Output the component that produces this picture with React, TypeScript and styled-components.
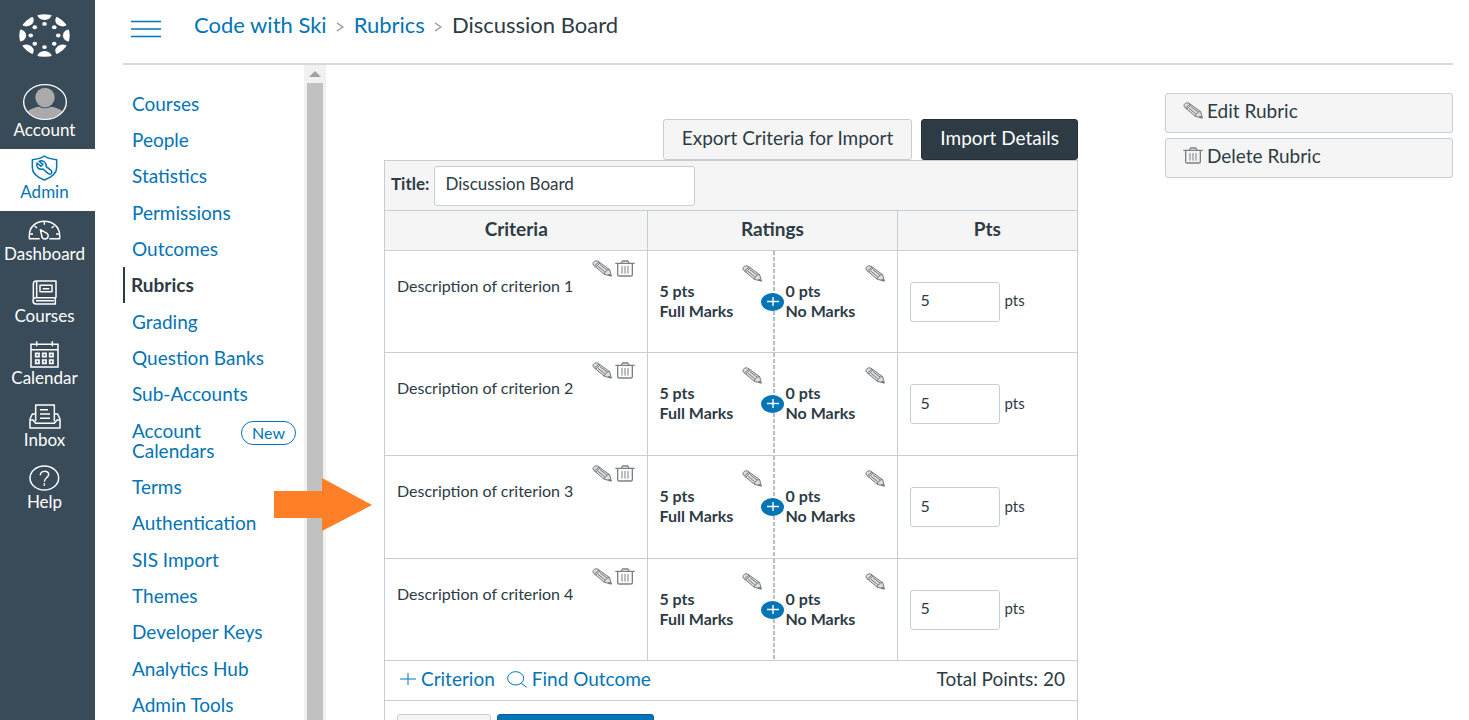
import React from "react";
import styled, { createGlobalStyle, css } from "styled-components";

const color = {
  ink: "#2d3b45",
  link: "#0374b5",
  nav: "#394b58",
  line: "#c7cdd1",
  panel: "#f5f5f5",
};

const GlobalStyle = createGlobalStyle`
  *, *::before, *::after { box-sizing: border-box; }
  body {
    margin: 0;
    background: #fff;
    color: ${color.ink};
    font-family: Lato, "Liberation Sans", sans-serif;
    font-size: 19px;
    line-height: 20px;
  }
  a { color: ${color.link}; text-decoration: none; }
  ul, ol { list-style: none; margin: 0; padding: 0; }
  button, input { font: inherit; color: inherit; }
  svg { display: block; flex: none; }
`;

const Page = styled.div`
  display: flex;
  height: 100vh;
  overflow: hidden;
`;

/* Global navigation */

const GlobalNav = styled.nav`
  flex: none;
  width: 95px;
  background: ${color.nav};
`;

const LogoLink = styled.a`
  display: flex;
  justify-content: center;
  height: 75px;
  padding: 14px 6px 0 0;
  margin-bottom: 4px;
`;

const NavLink = styled.a<{ $active?: boolean; $tall?: boolean }>`
  display: flex;
  flex-direction: column;
  align-items: center;
  justify-content: flex-end;
  height: ${(p) => (p.$tall ? 70 : 62)}px;
  padding: 0 6px 9px 0;
  font-size: 17px;
  color: ${(p) => (p.$active ? color.link : "#fff")};
  background: ${(p) => (p.$active ? "#fff" : "transparent")};
`;

const IconSlot = styled.span<{ $tall?: boolean }>`
  display: flex;
  align-items: center;
  height: ${(p) => (p.$tall ? 36 : 28)}px;
`;

/* Page body */

const Body = styled.div`
  display: flex;
  flex-direction: column;
  flex: 1;
  min-width: 0;
  padding: 0 16px 0 28px;
`;

const Header = styled.header`
  display: flex;
  align-items: center;
  gap: 33px;
  flex: none;
  height: 65px;
  padding: 0 0 13px 8px;
  border-bottom: 2px solid #d6dadd;
`;

const MenuButton = styled.button`
  padding: 8px 0 0;
  border: 0;
  background: none;
  color: ${color.link};
`;

const Crumbs = styled.ol`
  display: flex;
  align-items: center;
  font-size: 22px;
  line-height: 24px;

  li { display: flex; align-items: center; }
`;

const Separator = styled.span`
  padding: 4px 10px 0 9px;
`;

const Columns = styled.div`
  display: flex;
  flex: 1;
  min-height: 0;
`;

const SectionNav = styled.nav`
  display: flex;
  flex: none;
  width: 203px;
`;

const SectionList = styled.ul`
  flex: 1;
  padding-top: 21px;

  li:nth-child(3n) { margin-bottom: 1px; }
`;

const SectionLink = styled.a<{ $active?: boolean }>`
  display: flex;
  justify-content: space-between;
  align-items: flex-start;
  padding: 8px 8px 8px 9px;
  ${(p) =>
    p.$active &&
    css`
      padding-left: 6px;
      border-left: 2px solid ${color.ink};
      color: ${color.ink};
      font-weight: 700;
    `}
`;

const SectionText = styled.span<{ $narrow?: boolean }>`
  width: ${(p) => (p.$narrow ? "90px" : "auto")};
`;

const Badge = styled.span`
  height: 24px;
  padding: 0 10px;
  border: 1px solid ${color.link};
  border-radius: 12px;
  font-size: 16px;
  line-height: 22px;
`;

const ScrollTrack = styled.div`
  display: flex;
  flex-direction: column;
  align-items: center;
  flex: none;
  width: 22px;
  background: #f1f1f1;
`;

const ScrollArrow = styled.span`
  display: flex;
  align-items: center;
  height: 18px;
`;

const ScrollThumb = styled.span`
  flex: 1;
  width: 16px;
  background: #c1c1c1;
`;

const Main = styled.main`
  position: relative;
  flex: 1;
  min-width: 0;
  padding: 54px 87px 0 58px;
`;

const Pointer = styled.svg`
  position: absolute;
  top: 413px;
  left: -52px;
`;

const Toolbar = styled.div`
  display: flex;
  justify-content: flex-end;
  gap: 9px;
`;

const Button = styled.button<{ $tone?: "dark" | "primary" }>`
  height: 41px;
  padding: 0 18px 4px;
  border: 1px solid ${color.line};
  border-radius: 3px;
  background: ${color.panel};
  white-space: nowrap;
  ${(p) =>
    p.$tone &&
    css`
      color: #fff;
      background: ${p.$tone === "dark" ? color.ink : color.link};
      border-color: ${p.$tone === "dark" ? "#232e36" : "#0a5a9e"};
    `}
`;

/* Rubric */

const Rubric = styled.form`
  border: 1px solid ${color.line};
  border-bottom: 0;
`;

const TitleBar = styled.div`
  display: flex;
  align-items: center;
  gap: 5px;
  height: 49px;
  padding-left: 6px;
  background: ${color.panel};
  font-size: 17px;

  label { padding-bottom: 3px; font-weight: 700; }
`;

const TextBox = styled.input<{ $wide?: boolean }>`
  width: ${(p) => (p.$wide ? 261 : 90)}px;
  height: 40px;
  padding: 0 10px 4px;
  border: 1px solid ${color.line};
  border-radius: 3px;
  background: #fff;
  font-size: ${(p) => (p.$wide ? 17 : 16)}px;
`;

const Table = styled.table`
  width: 100%;
  table-layout: fixed;
  border-collapse: collapse;

  th, td { padding: 0; border: 1px solid ${color.line}; }
  th:first-child, td:first-child { border-left: 0; }
  th:last-child, td:last-child { border-right: 0; }
`;

const HeadCell = styled.th<{ $width: string }>`
  width: ${(p) => p.$width};
  height: 40px;
  background: ${color.panel};

  && { padding-bottom: 4px; }
`;

const CriterionRow = styled.tr`
  td { height: 103px; vertical-align: top; }
  &:nth-child(3n + 1) td { height: 102px; }
`;

const Description = styled.div`
  padding: 9px 12px;
  font-size: 16px;
`;

const Tools = styled.div`
  display: flex;
  justify-content: flex-end;
  gap: 3px;
  height: 16px;
`;

const IconButton = styled.button`
  display: flex;
  padding: 0;
  border: 0;
  background: none;
`;

const Ratings = styled.div`
  display: grid;
  grid-template-columns: 1fr 1fr;
  height: 100%;
`;

const Rating = styled.div`
  position: relative;
  padding: 14px 11px 0;
  font-size: 16px;
  font-weight: 700;

  & + & {
    padding-left: 13px;
    padding-right: 12px;
    background: linear-gradient(#b7bfc4 4px, transparent 4px) 0 0 / 2px 6px repeat-y;
  }
`;

const AddRating = styled.button`
  position: absolute;
  top: 42px;
  left: -12px;
  padding: 0;
  border: 0;
  background: none;
`;

const Points = styled.label`
  display: flex;
  align-items: center;
  gap: 5px;
  height: 100%;
  padding-left: 12px;
  font-size: 15px;
`;

const PointsUnit = styled.span`
  padding-bottom: 3px;
`;

const Footer = styled.div`
  display: flex;
  align-items: center;
  gap: 12px;
  height: 39px;
  padding: 0 12px 3px 15px;
`;

const FooterLink = styled.a`
  display: flex;
  align-items: center;
  gap: 5px;
`;

const Total = styled.span`
  margin-left: auto;
`;

const Actions = styled.div`
  display: flex;
  gap: 6px;
  padding: 13px 12px;
  border-top: 1px solid ${color.line};
`;

const Aside = styled.aside`
  display: flex;
  flex-direction: column;
  gap: 5px;
  flex: none;
  width: 288px;
  padding-top: 28px;
`;

const SideButton = styled(Button)`
  display: flex;
  align-items: center;
  gap: 4px;
  height: 40px;
  padding-left: 17px;
  padding-bottom: 5px;
`;

/* Icons */

const spokes = [0, 1, 2, 3, 4, 5, 6, 7].map((n) => (n * Math.PI) / 4);

const Logo = () => (
  <svg width="51" height="43" viewBox="-100 -100 200 200" preserveAspectRatio="none" fill="#fff">
    <clipPath id="disc">
      <circle r="99" />
    </clipPath>
    <g clipPath="url(#disc)">
      {spokes.map((a) => (
        <circle key={a} cx={Math.cos(a) * 101} cy={Math.sin(a) * 101} r="29" />
      ))}
    </g>
    {spokes.map((a) => (
      <circle key={a} cx={Math.cos(a) * 54} cy={Math.sin(a) * 54} r="9" />
    ))}
  </svg>
);

const Avatar = () => (
  <svg width="44" height="36" viewBox="0 0 132 106" preserveAspectRatio="none">
    <clipPath id="face">
      <ellipse cx="66" cy="53" rx="62" ry="49" />
    </clipPath>
    <g clipPath="url(#face)" fill="#aaa">
      <ellipse cx="66" cy="40" rx="29" ry="29" />
      <path d="M8 106V88C16 74 38 68 48 67Q66 76 84 67C96 68 116 74 124 88V106Z" />
    </g>
    <ellipse cx="66" cy="53" rx="64" ry="51" fill="none" stroke="#fff" strokeWidth="4" />
  </svg>
);

const ShieldIcon = () => (
  <svg width="27" height="26" viewBox="0 0 81 78" fill="none" stroke="currentColor" strokeWidth="4.500" strokeLinejoin="round">
    <path d="M40 3C30 11 18 13 4 14V38C4 58 22 68 40 75C58 68 77 58 77 38V14C62 13 50 11 40 3Z" />
    <path d="M18 24C15 36 22 45 36 42L52 56C60 60 66 53 60 46L46 35C46 22 36 14 24 19L36 28L30 34Z" />
  </svg>
);

const GaugeIcon = () => (
  <svg width="33" height="20" viewBox="0 0 99 60" fill="none" stroke="currentColor" strokeWidth="4.500" strokeLinejoin="round">
    <path d="M35 56H4V46C4 20 24 4 49 4S95 20 95 46V56H64" />
    <path d="M37 29L57 40C65 48 59 57 51 57C43 57 41 50 41 46Z" />
    <path d="M49 5V14M20 18L27 24M78 18L71 24M5 42H15M94 42H84" />
  </svg>
);

const BookIcon = () => (
  <svg width="25" height="25" viewBox="0 0 75 75" fill="none" stroke="currentColor" strokeWidth="4.500" strokeLinejoin="round">
    <path d="M72 53H12C0 53 0 72 12 72H72M70 53V72M12 62H66M4 60V12Q4 3 13 3H72V53" />
    <path d="M14 4V52M24 16H60V35H24ZM32 26H52" />
  </svg>
);

const CalendarIcon = () => (
  <svg width="29" height="27" viewBox="0 0 87 81" fill="none" stroke="currentColor" strokeWidth="4.500">
    <path d="M3 10H84V78H3ZM3 26H84M20 1V16M67 1V16" />
    <path strokeWidth="5" d="M17 37H27V47H17ZM38 37H48V47H38ZM59 37H69V47H59ZM17 57H27V67H17ZM38 57H48V67H38ZM59 57H69V67H59Z" />
  </svg>
);

const InboxIcon = () => (
  <svg width="32" height="25" viewBox="0 0 96 75" fill="none" stroke="currentColor" strokeWidth="4.500" strokeLinejoin="round">
    <path d="M20 52V3H76V52M33 17H57M33 30H63M33 43H63" />
    <path d="M19 30H10L3 45V72H93V45L86 30H77M3 48H12L20 58H76L84 48H93" />
  </svg>
);

const HelpIcon = () => (
  <svg width="31" height="26" viewBox="0 0 93 78" fill="none" stroke="currentColor" strokeWidth="4.500">
    <ellipse cx="46" cy="39" rx="43" ry="36" />
    <path d="M34 31C34 15 60 16 59 29C58 39 46 38 46 50M46 55V62" />
  </svg>
);

const MenuIcon = () => (
  <svg width="30" height="18" viewBox="0 0 30 18" stroke="currentColor" strokeWidth="1.500">
    <path d="M0 1.500H30M0 9H30M0 16.500H30" />
  </svg>
);

const ChevronIcon = () => (
  <svg width="8" height="10" viewBox="0 0 8 10" fill="none" stroke="#8b959c" strokeWidth="1.300">
    <path d="M1 1L7 5L1 9" />
  </svg>
);

const PencilIcon = () => (
  <svg width="20" height="17" viewBox="0 0 60 51" fill="none" stroke="#74797d" strokeWidth="3" strokeLinejoin="round">
    <path fill="#dcdee0" d="M3 11C3 5 9 1 17 3L53 29L58 48L37 43L4 15Z" />
    <path d="M7 18L21 6M11 21L24 9M37 43C36 37 42 34 43 34C44 29 50 29 53 29M18 19L38 35M24 14L45 30" />
    <path fill="#74797d" d="M52 42L58 48L49 46Z" />
  </svg>
);

const TrashIcon = () => (
  <svg width="20" height="17" viewBox="0 0 60 51" fill="none" stroke="#7b8084" strokeWidth="4">
    <path d="M1 10H59M19 9L23 3H38L42 9M8 12V44Q8 48 13 48H47Q52 48 52 44V12" />
    <path strokeWidth="3" d="M21 18V41M30 18V41M39 18V41" />
  </svg>
);

const PlusIcon = () => (
  <svg width="16" height="14" viewBox="0 0 16 14" stroke="currentColor">
    <path d="M8 1V13M0 7H16" />
  </svg>
);

const SearchIcon = () => (
  <svg width="20" height="17" viewBox="0 0 60 51" fill="none" stroke="currentColor" strokeWidth="3">
    <ellipse cx="26" cy="22" rx="24" ry="20" />
    <path d="M43 37L59 49" />
  </svg>
);

const AddIcon = () => (
  <svg width="23" height="18" viewBox="0 0 23 18">
    <ellipse cx="11.500" cy="9" rx="11.500" ry="9" fill={color.link} />
    <path d="M12 4V13M6 8.500H18" stroke="#fff" strokeWidth="1.400" />
  </svg>
);

/* Content */

const globalItems = [
  { label: "Account", icon: <Avatar />, tall: true },
  { label: "Admin", icon: <ShieldIcon />, active: true },
  { label: "Dashboard", icon: <GaugeIcon /> },
  { label: "Courses", icon: <BookIcon /> },
  { label: "Calendar", icon: <CalendarIcon /> },
  { label: "Inbox", icon: <InboxIcon /> },
  { label: "Help", icon: <HelpIcon /> },
];

const sections = [
  "Courses",
  "People",
  "Statistics",
  "Permissions",
  "Outcomes",
  "Rubrics",
  "Grading",
  "Question Banks",
  "Sub-Accounts",
  "Account Calendars",
  "Terms",
  "Authentication",
  "SIS Import",
  "Themes",
  "Developer Keys",
  "Analytics Hub",
  "Admin Tools",
];

const criteria = [1, 2, 3, 4];

const CrumbSeparator = () => (
  <Separator aria-hidden="true">
    <ChevronIcon />
  </Separator>
);

const RatingBox = ({ points, name, addable }: { points: number; name: string; addable?: boolean }) => (
  <Rating>
    <Tools>
      <IconButton type="button" aria-label={`Edit ${name}`}>
        <PencilIcon />
      </IconButton>
    </Tools>
    <div>{points} pts</div>
    <div>{name}</div>
    {addable && (
      <AddRating type="button" aria-label="Add rating">
        <AddIcon />
      </AddRating>
    )}
  </Rating>
);

export default function App() {
  return (
    <Page>
      <GlobalStyle />
      <GlobalNav aria-label="Global">
        <LogoLink href="#" aria-label="Home">
          <Logo />
        </LogoLink>
        {globalItems.map((item) => (
          <NavLink key={item.label} href="#" $active={item.active} $tall={item.tall}>
            <IconSlot $tall={item.tall}>{item.icon}</IconSlot>
            {item.label}
          </NavLink>
        ))}
      </GlobalNav>

      <Body>
        <Header>
          <MenuButton aria-label="Toggle menu">
            <MenuIcon />
          </MenuButton>
          <Crumbs>
            <li><a href="#">Code with Ski</a></li>
            <li><CrumbSeparator /><a href="#">Rubrics</a></li>
            <li><CrumbSeparator />Discussion Board</li>
          </Crumbs>
        </Header>

        <Columns>
          <SectionNav aria-label="Account">
            <SectionList>
              {sections.map((name) => {
                const isNew = name === "Account Calendars";
                return (
                  <li key={name}>
                    <SectionLink href="#" $active={name === "Rubrics"}>
                      <SectionText $narrow={isNew}>{name}</SectionText>
                      {isNew && <Badge>New</Badge>}
                    </SectionLink>
                  </li>
                );
              })}
            </SectionList>
            <ScrollTrack>
              <ScrollArrow>
                <svg width="12" height="6" viewBox="0 0 12 6" fill="#a3a3a3">
                  <path d="M0 6L6 0L12 6Z" />
                </svg>
              </ScrollArrow>
              <ScrollThumb />
            </ScrollTrack>
          </SectionNav>

          <Main>
            <Toolbar>
              <Button>Export Criteria for Import</Button>
              <Button $tone="dark">Import Details</Button>
            </Toolbar>
            <Rubric>
              <TitleBar>
                <label htmlFor="title">Title:</label>
                <TextBox id="title" $wide defaultValue="Discussion Board" />
              </TitleBar>
              <Table>
                <thead>
                  <tr>
                    <HeadCell $width="38%">Criteria</HeadCell>
                    <HeadCell $width="36%">Ratings</HeadCell>
                    <HeadCell $width="26%">Pts</HeadCell>
                  </tr>
                </thead>
                <tbody>
                  {criteria.map((n) => (
                    <CriterionRow key={n}>
                      <td>
                        <Description>
                          <Tools>
                            <IconButton type="button" aria-label={`Edit criterion ${n}`}>
                              <PencilIcon />
                            </IconButton>
                            <IconButton type="button" aria-label={`Delete criterion ${n}`}>
                              <TrashIcon />
                            </IconButton>
                          </Tools>
                          Description of criterion {n}
                        </Description>
                      </td>
                      <td>
                        <Ratings>
                          <RatingBox points={5} name="Full Marks" />
                          <RatingBox points={0} name="No Marks" addable />
                        </Ratings>
                      </td>
                      <td>
                        <Points>
                          <TextBox defaultValue="5" />
                          <PointsUnit>pts</PointsUnit>
                        </Points>
                      </td>
                    </CriterionRow>
                  ))}
                </tbody>
              </Table>
              <Footer>
                <FooterLink href="#"><PlusIcon />Criterion</FooterLink>
                <FooterLink href="#"><SearchIcon />Find Outcome</FooterLink>
                <Total>Total Points: 20</Total>
              </Footer>
              <Actions>
                <Button type="button">Cancel</Button>
                <Button type="button" $tone="primary">Update Rubric</Button>
              </Actions>
            </Rubric>
            <Pointer width="98" height="53" viewBox="0 0 98 53" fill="#ff7f27">
              <path d="M0 13H48V0L98 27L48 53V40H0Z" />
            </Pointer>
          </Main>

          <Aside>
            <SideButton><PencilIcon />Edit Rubric</SideButton>
            <SideButton><TrashIcon />Delete Rubric</SideButton>
          </Aside>
        </Columns>
      </Body>
    </Page>
  );
}
